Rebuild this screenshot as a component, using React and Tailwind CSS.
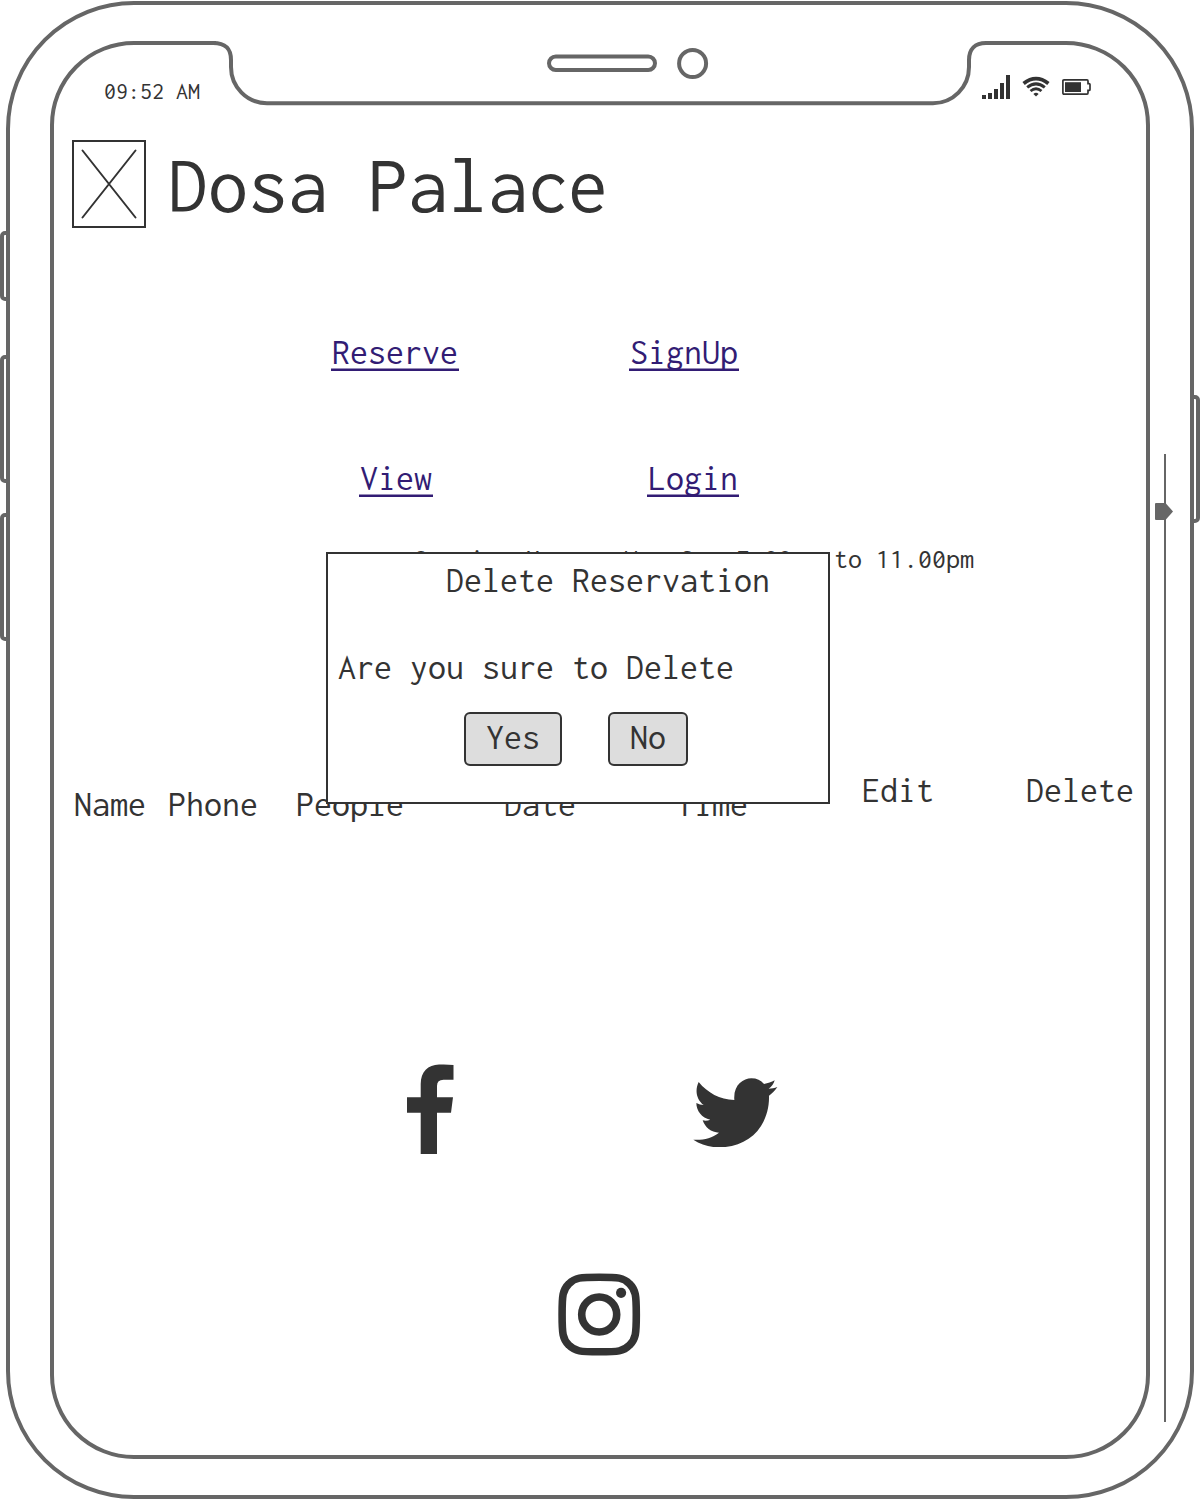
function SignalIcon() {
  return (
    <svg className="block h-6 w-7" viewBox="0 0 28 24" fill="#333" shapeRendering="crispEdges">
      <rect x="0" y="20" width="4" height="4" />
      <rect x="6" y="18" width="4" height="6" />
      <rect x="12" y="14" width="4" height="10" />
      <rect x="18" y="8" width="4" height="16" />
      <rect x="24" y="0" width="4" height="24" />
    </svg>
  );
}

function WifiIcon() {
  return (
    <svg className="mt-0.5 block h-5 w-[26px] overflow-visible" viewBox="0 0 26 20" fill="none" stroke="#333">
      <path d="M.6 6.500Q13 -3.200 25.400 6.500" strokeWidth="3.800" />
      <path d="M4.200 10.400Q13 3.400 21.800 10.400" strokeWidth="3" />
      <path d="M7.500 14Q13 9.400 18.500 14" strokeWidth="2.800" />
      <path d="M10.400 16.900Q13 14.500 15.600 16.900L13 19.400Z" fill="#333" stroke="none" />
    </svg>
  );
}

function BatteryIcon() {
  return (
    <svg className="mt-1 block h-4 w-[29px]" viewBox="0 0 29 16" fill="none">
      <path
        d="M2 .9 H25 Q26 .9 26 2 V4.6 H27 Q28 4.6 28 5.6 V10.4 Q28 11.4 27 11.4 H26 V14 Q26 15.1 25 15.1 H2 Q.9 15.1 .9 14 V2 Q.9 .9 2 .9 Z"
        stroke="#333"
        strokeWidth="1.7"
      />
      <rect x="3" y="3.2" width="16" height="9.8" fill="#333" />
    </svg>
  );
}

function FacebookIcon() {
  return (
    <svg className="block h-[90px] w-[47px]" viewBox="0 0 47 90" fill="#333">
      <path d="M0 33.3H13.700V20C13.700 8 21 .8 32 .6Q40 .3 46.500 1V15.700H36.500Q30 15.700 30 22V33.300H46L44 48.800H30V90H13.700V48.800H0Z" />
    </svg>
  );
}

function TwitterIcon() {
  return (
    <svg className="block h-[69.7px] w-[84.7px]" viewBox="940 83 254 209" fill="#333">
      <path d="M957 95C984 128 1020 147 1064 149C1060 105 1090 84 1115 84C1131 84 1144 90 1153 101C1165 99 1175 96 1185 90C1182 101 1176 109 1167 115C1176 115 1184 113 1193 110C1186 120 1178 129 1168 136C1170 230 1105 291 1018 291C990 291 964 283 941 268C970 270 995 264 1018 247C994 246 976 231 969 210C977 212 985 211 992 208C966 203 950 181 950 158C957 162 965 164 972 164C950 147 945 120 957 95Z" />
    </svg>
  );
}

function InstagramIcon() {
  return (
    <svg className="block h-[83px] w-[83px]" viewBox="0 0 83 83" fill="none" stroke="#333" strokeWidth="7.6">
      <path d="M41.200 4.200C60 4.200 65.500 4.500 71.500 10.800C77.800 17 78.300 22.500 78.300 41.500C78.300 60.500 77.800 66 71.500 72.200C65.500 78.500 60 78.800 41.200 78.800C22.500 78.800 17 78.500 10.900 72.200C4.600 66 4.100 60.500 4.100 41.500C4.100 22.500 4.600 17 10.900 10.800C17 4.500 22.500 4.200 41.200 4.200Z" />
      <circle cx="41.200" cy="41.500" r="17.500" />
      <circle cx="63.100" cy="19.800" r="5.100" fill="#333" stroke="none" />
    </svg>
  );
}

function NavLink({ children }) {
  return (
    <a
      href="#"
      className="relative block text-[#321c74] after:absolute after:-left-px after:-right-px after:top-[34px] after:h-[3px] after:border-t after:border-[#321c74]/50 after:bg-[#321c74] after:bg-clip-padding"
    >
      {children}
    </a>
  );
}

function Notch() {
  return (
    <svg className="absolute left-[203px] top-[38px] h-[70px] w-[794px]" viewBox="203 38 794 70" fill="none">
      <path d="M216 38V43C226 43 231 49 231 60V67C231 87 247 103 267 103H933C953 103 969 87 969 67V60C969 49 975 43 985 43V38Z" fill="#fff" />
      <path
        d="M203 43H213C226 43 231 49 231 60V67C231 87 247 103.200 267 103.200H933C953 103.200 969 87 969 67V60C969 49 975 43 986 43H997"
        stroke="#666"
        strokeWidth="4"
      />
      <rect x="549" y="56.500" width="106" height="13.500" rx="6.750" stroke="#666" strokeWidth="4" />
      <circle cx="692.600" cy="63.500" r="13.500" stroke="#666" strokeWidth="4" />
    </svg>
  );
}

function HardwareButtons() {
  return (
    <>
      <div className="absolute left-0 top-[231px] h-[70px] w-[10px] rounded-l-[5px] border-4 border-[#666]" />
      <div className="absolute left-0 top-[355px] h-[128px] w-[10px] rounded-l-[5px] border-4 border-[#666]" />
      <div className="absolute left-0 top-[513px] h-[128px] w-[10px] rounded-l-[5px] border-4 border-[#666]" />
      <div className="absolute left-[1190px] top-[395px] h-[128px] w-[10px] rounded-r-[5px] border-4 border-[#666]" />
    </>
  );
}

function ScrollRail() {
  return (
    <div className="absolute left-[1155px] top-[454px] h-[968px] w-[18px]">
      <div className="ml-[9px] h-full w-[2px] bg-[#666]" />
      <svg className="absolute left-0 top-[49px] block h-[17px] w-[18px]" viewBox="0 0 18 17" fill="#666">
        <path d="M1 0H10.500L18 8.500L10.500 17H1Q0 17 0 16V1Q0 0 1 0Z" />
      </svg>
    </div>
  );
}

function DeleteDialog() {
  return (
    <div
      role="dialog"
      className="absolute left-[326px] top-[552px] h-[252px] w-[504px] border-2 border-[#333] bg-white pl-[10px] pt-2"
    >
      <h2 className="pl-[108px]">Delete Reservation</h2>
      <p className="mt-[51px]">Are you sure to Delete</p>
      <div className="mt-[27px] flex gap-[46px] pl-[126px]">
        <button className="h-[54px] w-[98px] rounded-[6px] border-2 border-[#333] bg-[#ddd] pb-1">Yes</button>
        <button className="h-[54px] w-[80px] rounded-[6px] border-2 border-[#333] bg-[#ddd] pb-1">No</button>
      </div>
    </div>
  );
}

export default function App() {
  return (
    <div className="relative h-[1500px] w-[1200px] overflow-hidden whitespace-nowrap bg-white pl-[6px] pt-px font-['Inconsolata','Liberation_Mono',monospace] text-[36px] leading-[36px] text-[#333]">
      <div className="h-[1498px] w-[1188px] rounded-[128px] border-4 border-[#666] pl-10 pt-9">
        <main className="h-[1418px] w-[1100px] rounded-[84px] border-4 border-[#666] pt-[30px]">
          <div className="flex h-7 items-start justify-between pl-[50px] pr-[55px]">
            <span className="mt-1 text-[24px] leading-6">09:52 AM</span>
            <div className="flex gap-[13px]">
              <SignalIcon />
              <WifiIcon />
              <BatteryIcon />
            </div>
          </div>

          <header className="mt-[37px] flex h-[88px] items-start pl-[18px]">
            <div className="h-[88px] w-[74px] border-2 border-[#333]">
              <svg className="block h-[84px] w-[70px]" viewBox="0 0 70 84" stroke="#333" strokeWidth="2" strokeLinecap="round">
                <path d="M8.500 8.500L61.500 75.500M61.500 8.500L8.500 75.500" />
              </svg>
            </div>
            <h1 className="ml-[22px] mt-[5px] text-[80px] leading-[80px]">Dosa Palace</h1>
          </header>

          <nav className="mt-[106px] flex gap-[172px] pl-[278px]">
            <div className="flex w-[126px] flex-col items-start gap-[90px]">
              <NavLink>Reserve</NavLink>
              <div className="pl-7">
                <NavLink>View</NavLink>
              </div>
            </div>
            <div className="flex flex-col items-end gap-[90px]">
              <NavLink>SignUp</NavLink>
              <NavLink>Login</NavLink>
            </div>
          </nav>

          <p className="mt-[49px] pl-[360px] text-[28px] leading-7">Opening Hours: Mon-Sun 7.00am to 11.00pm</p>

          <div className="mt-[199px] flex h-[50px] items-end pl-5">
            <span className="w-[94px]">Name</span>
            <span className="w-[128px]">Phone</span>
            <span className="w-[208px]">People</span>
            <span className="w-[172px]">Date</span>
            <span className="w-[186px]">Time</span>
            <span className="w-[164px] self-start">Edit</span>
            <span className="self-start">Delete</span>
          </div>

          <footer className="mt-[242px]">
            <div className="flex gap-[239px] pl-[353px]">
              <FacebookIcon />
              <div className="pt-[13.7px]">
                <TwitterIcon />
              </div>
            </div>
            <div className="mt-[119px] pl-[504px]">
              <InstagramIcon />
            </div>
          </footer>
        </main>
      </div>

      <Notch />
      <HardwareButtons />
      <ScrollRail />
      <DeleteDialog />
    </div>
  );
}
